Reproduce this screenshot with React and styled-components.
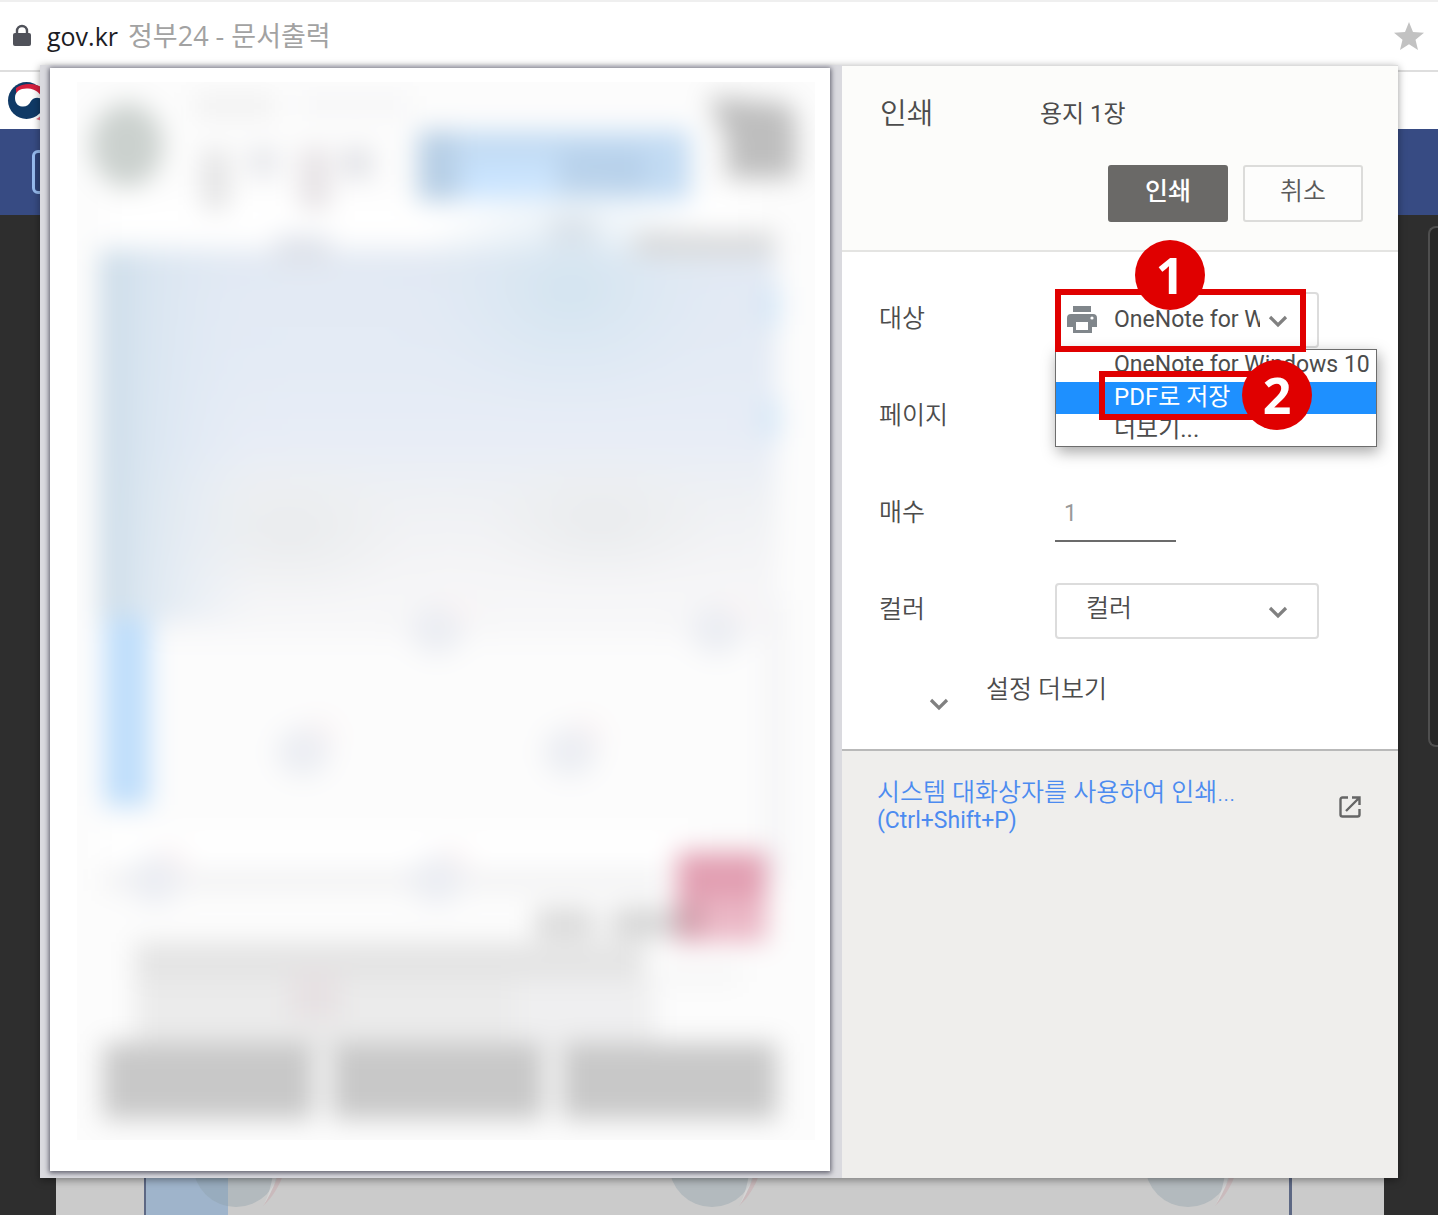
import React, { useState } from "react";
import styled, { createGlobalStyle } from "styled-components";

const GlobalStyle = createGlobalStyle`
  *, *::before, *::after { box-sizing: border-box; }
  body {
    margin: 0;
    color: #4c4c4c;
    font-family: Roboto, "Noto Sans CJK KR", sans-serif;
    font-size: 25px;
    line-height: 28px;
  }
  button, input, select { font: inherit; color: inherit; margin: 0; }
`;

const Screen = styled.div`
  display: grid;
  grid-template-columns: minmax(0, 1fr);
  min-height: 100vh;
  > * { grid-area: 1 / 1; }
`;

/* ---------- window behind the dialog ---------- */

const Backdrop = styled.div`
  display: flex;
  flex-direction: column;
  background: #2e2e2e;
`;

const AddressBar = styled.header`
  display: flex;
  align-items: center;
  height: 72px;
  padding: 0 14px 0 13px;
  background: #fff;
  border-top: 2px solid #efefef;
  border-bottom: 2px solid #dedede;
`;

const Address = styled.div`
  flex: 1;
  margin-left: 16px;
  color: #a2a2a2;
  font-family: "Open Sans", "Noto Sans CJK KR", sans-serif;
  font-size: 27px;
  font-weight: 400;
`;

const Host = styled.span`
  margin-right: 10px;
  color: #1c1c24;
  font-size: 25px;
`;

const StarButton = styled.button`
  display: flex;
  padding: 0;
  border: 0;
  background: none;
`;

const SiteHeader = styled.div`
  display: flex;
  height: 57px;
  padding: 9px 0 0 7px;
  background: #fff;
`;

const SiteNav = styled.div`
  display: flex;
  align-items: center;
  height: 86px;
  padding-left: 32px;
  background: #374b83;
`;

const NavBox = styled.div`
  width: 90px;
  height: 44px;
  background: #2e4278;
  border: 3px solid #97bcf0;
  border-radius: 6px;
`;

const Viewer = styled.div`
  display: flex;
  flex: 1;
  padding-left: 56px;
`;

const Sheet = styled.div`
  display: flex;
  flex: 1;
  justify-content: center;
  padding: 0 92px 0 88px;
  background: #cbcbcb;
`;

const SheetBody = styled.div`
  display: flex;
  flex: 1;
  align-items: flex-end;
  justify-content: space-between;
  padding: 0 44px 0 47px;
  border: solid #5d6884;
  border-width: 0 3px 0 2px;
  background: linear-gradient(90deg, #9fb4cb 82px, transparent 82px);
`;

const ScrollRail = styled.div`
  display: flex;
  justify-content: flex-end;
  width: 54px;
  padding-top: 11px;
`;

const ScrollThumb = styled.div`
  width: 10px;
  height: 521px;
  background: #272727;
  border: 2px solid #4f4f4f;
  border-right: 0;
  border-radius: 8px 0 0 8px;
`;

/* ---------- print dialog ---------- */

const Dialog = styled.section`
  display: grid;
  grid-template-columns: minmax(0, 1fr) 556px;
  align-self: start;
  margin: 65px 40px 37px;
  background: #efeeec;
  box-shadow: 0 2px 8px rgba(0, 0, 0, 0.4);
`;

const PreviewPane = styled.div`
  padding: 3px 12px 7px 10px;
  background: #dadadf;
`;

const Paper = styled.div`
  padding: 14px 15px 31px 27px;
  background: #fff;
  box-shadow: 0 1px 5px 1px rgba(50, 50, 65, 0.75);
  svg { display: block; width: 100%; height: auto; }
`;

const Settings = styled.form`
  display: flex;
  flex-direction: column;
`;

const Heading = styled.div`
  display: flex;
  flex-direction: column;
  gap: 37px;
  padding: 34px 35px 28px 38px;
  background: #fcfcfa;
  border-top: 1px solid #dcdcdc;
  border-bottom: 2px solid #e4e4e2;
`;

const TitleRow = styled.div`
  display: flex;
  align-items: center;
`;

const Title = styled.h1`
  width: 160px;
  margin: 0;
  font-size: 29px;
  font-weight: 350;
  line-height: 28px;
`;

const Summary = styled.span`
  font-size: 24px;
`;

const Actions = styled.div`
  display: flex;
  justify-content: flex-end;
  gap: 15px;
`;

const ActionButton = styled.button`
  width: 120px;
  height: 57px;
  padding: 0 0 4px;
  border: 2px solid ${(p) => (p.$primary ? "#6a6967" : "#dcdcda")};
  border-radius: 3px;
  background: ${(p) => (p.$primary ? "#6a6967" : "#fdfdfc")};
  color: ${(p) => (p.$primary ? "#fff" : "#5a5a5a")};
  font-weight: ${(p) => (p.$primary ? 500 : 350)};
`;

const Fields = styled.div`
  display: flex;
  flex-direction: column;
  gap: 1px;
  padding: 20px 22px 0 37px;
  background: #fff;
`;

const Field = styled.div`
  display: flex;
  align-items: center;
  height: 96px;
`;

const FieldLabel = styled.label`
  width: 176px;
  padding-bottom: 2px;
  font-weight: 350;
`;

const SelectBox = styled.div`
  position: relative;
  width: 264px;
`;

const Select = styled.select`
  display: block;
  width: 100%;
  height: 56px;
  padding: 0 57px ${(p) => (p.$wide ? 0 : 4)}px ${(p) => (p.$wide ? 57 : 29)}px;
  appearance: none;
  background: #fff;
  border: 2px solid #dcdcdc;
  border-radius: 4px;
  font-size: ${(p) => (p.$wide ? 23 : 25)}px;
  font-weight: ${(p) => (p.$wide ? 400 : 350)};
`;

const SelectArrow = styled.span`
  position: absolute;
  top: 23px;
  right: 31px;
  display: flex;
  pointer-events: none;
`;

const SelectIcon = styled.span`
  position: absolute;
  top: 14px;
  left: 11px;
  display: flex;
  pointer-events: none;
`;

const Options = styled.div`
  position: absolute;
  z-index: 1;
  top: 57px;
  left: 0;
  width: 322px;
  background: #fff;
  border: 1px solid #6d6d6d;
  box-shadow: 2px 5px 14px rgba(0, 0, 0, 0.35);
`;

const Option = styled.button`
  display: block;
  width: 100%;
  height: 32px;
  padding: 0 0 2px 58px;
  border: 0;
  background: ${(p) => (p.$active ? "#1e90ff" : "#fff")};
  color: ${(p) => (p.$active ? "#fff" : "#4c4c4c")};
  font-size: ${(p) => (p.$korean ? 24 : 23)}px;
  line-height: 28px;
  text-align: left;
  white-space: nowrap;
`;

const CountInput = styled.input`
  width: 121px;
  height: 56px;
  padding: 0 9px;
  border: 0;
  border-bottom: 2px solid #6b6b6b;
  background: none;
  color: #999;
  font-size: 23px;
`;

const MoreButton = styled.button`
  display: flex;
  gap: 37px;
  height: 92px;
  padding: 17px 0 0 87px;
  border: 0;
  border-bottom: 2px solid #b9b9b9;
  background: #fff;
  font-weight: 350;
  text-align: left;
  svg { margin-top: 22px; }
`;

const SystemDialog = styled.a`
  display: flex;
  align-items: center;
  justify-content: space-between;
  padding: 28px 36px 16px 35px;
  color: #4c8bf0;
  font-size: 23px;
  text-decoration: none;
`;

const SystemText = styled.span`
  display: flex;
  flex-direction: column;
`;

const KoreanLine = styled.span`
  font-size: 25px;
  font-weight: 350;
`;

/* ---------- tutorial marks ---------- */

const Frame = styled.span`
  position: absolute;
  z-index: 2;
  top: ${(p) => p.$y}px;
  left: ${(p) => p.$x}px;
  width: ${(p) => p.$w}px;
  height: ${(p) => p.$h}px;
  border: 6px solid #e00000;
  pointer-events: none;
`;

const Badge = styled.span`
  position: absolute;
  z-index: 3;
  top: ${(p) => p.$y}px;
  left: ${(p) => p.$x}px;
  width: 70px;
  height: 70px;
  border-radius: 50%;
  background: #e00000;
  color: #fff;
  font-family: "Open Sans", sans-serif;
  font-size: 50px;
  font-weight: 700;
  line-height: 70px;
  text-align: center;
  pointer-events: none;
`;

const Chevron = () => (
  <svg width="20" height="13" viewBox="0 0 20 13" fill="none" stroke="#808080" strokeWidth="3.2">
    <path d="M2 2l8 8 8-8" />
  </svg>
);

const Lock = () => (
  <svg width="18" height="24" viewBox="0 0 18 24">
    <path d="M4 10V7a5 5 0 0 1 10 0v3" fill="none" stroke="#50525a" strokeWidth="2.4" />
    <rect y="9" width="18" height="13" rx="2" fill="#50525a" />
  </svg>
);

const Star = () => (
  <svg width="30" height="30" viewBox="0 0 30 30" fill="#c2c2c2">
    <path d="M15 1l4 10 11 .8-8.500 7L24 29l-9-5.800L6 29l2.500-10.200L0 11.800 11 11z" />
  </svg>
);

const Emblem = () => (
  <svg width="40" height="40" viewBox="0 0 40 40">
    <circle cx="19.500" cy="19.500" r="18.500" fill="#103a66" />
    <path d="M9 7C16 2 28 1 38 8v10C30 10 20 6 9 12z" fill="#d5203e" />
    <path d="M8 17C8 10 14 7 21 7.500 28 8 34 12 36 19c-4-3-9-3-12 1-2 4-5 6-9 5.500C10 25 8 21 8 17z" fill="#fff" />
    <path d="M29 38c2-1 4-2 6-5v7z" fill="#e36a7c" />
  </svg>
);

const Watermark = () => (
  <svg width="100" height="90" viewBox="0 0 100 90">
    <circle cx="43" cy="39" r="43" fill="#8f9fa9" opacity=".4" />
    <path d="M94 20C96 46 83 70 70 81 80 66 89 46 89 20z" fill="#c99aa0" opacity=".35" />
    <path d="M88 20c0 26-8 46-18 61 8-14 12-36 12-61z" fill="#dcdcdc" opacity=".6" />
  </svg>
);

const Printer = () => (
  <svg width="32" height="28" viewBox="0 0 32 28">
    <rect x="7" y="0" width="18" height="6" fill="#80868b" />
    <path d="M5 8h22q4 0 4 4v9h-5v6H7v-6H1v-9q0-4 4-4z" fill="#80868b" />
    <rect x="10" y="16" width="12" height="8" fill="#fff" />
    <circle cx="26" cy="12" r="1.600" fill="#fff" />
  </svg>
);

const OpenExternal = () => (
  <svg width="24" height="24" viewBox="0 0 24 24" fill="none" stroke="#666" strokeWidth="2.400">
    <path d="M10 2.500H4.500q-2 0-2 2v15q0 2 2 2h15q2 0 2-2V14M14 2.500h7.500V10M21 3L8 16" />
  </svg>
);

const blots = [[437, 630], [717, 630], [303, 752], [570, 752], [155, 880], [437, 880]];

const DocumentPreview = () => (
  <svg viewBox="77 82 738 1058" role="img" aria-label="문서">
    <defs>
      <filter id="soft" x="0" y="0" width="100%" height="100%" colorInterpolationFilters="sRGB">
        <feGaussianBlur stdDeviation="13" />
      </filter>
      <linearGradient id="table" x1="0" y1="0" x2="0" y2="1">
        <stop offset="0" stopColor="#e2e9f3" />
        <stop offset=".3" stopColor="#e4ebf5" />
        <stop offset=".5" stopColor="#e8edf6" />
        <stop offset=".64" stopColor="#eff1f4" />
        <stop offset=".8" stopColor="#f4f4f6" />
        <stop offset="1" stopColor="#f8f8f9" />
      </linearGradient>
      <linearGradient id="side" x1="0" y1="0" x2="1" y2="0">
        <stop offset="0" stopColor="#c8d9e6" />
        <stop offset=".25" stopColor="#d5e3ef" stopOpacity=".8" />
        <stop offset="1" stopColor="#e2ebf6" stopOpacity="0" />
      </linearGradient>
      <radialGradient id="tint">
        <stop offset="0" stopColor="#d3e4f0" />
        <stop offset="1" stopColor="#dce9f4" stopOpacity="0" />
      </radialGradient>
      <radialGradient id="gray">
        <stop offset="0" stopColor="#e9ebed" />
        <stop offset="1" stopColor="#eceeef" stopOpacity="0" />
      </radialGradient>
    </defs>
    <rect x="77" y="82" width="738" height="1058" fill="#fbfbfb" />
    <g filter="url(#soft)">
      <rect x="40" y="40" width="820" height="1140" fill="#fcfcfc" />
      <rect x="110" y="198" width="640" height="38" fill="#fff" />
      <ellipse cx="127" cy="145" rx="36" ry="42" fill="#cbd1ce" />
      <rect x="195" y="94" width="80" height="24" fill="#f1f1f1" />
      <rect x="300" y="94" width="110" height="22" fill="#f6f6f7" />
      <rect x="203" y="150" width="25" height="60" fill="#e2e2e3" />
      <rect x="248" y="148" width="30" height="28" fill="#e6e7eb" />
      <rect x="300" y="148" width="30" height="62" fill="#e6e2e5" />
      <rect x="343" y="148" width="28" height="30" fill="#dfe0e5" />
      <rect x="418" y="131" width="272" height="68" fill="#c2dbf3" />
      <rect x="418" y="131" width="38" height="70" fill="#b6cee5" />
      <rect x="465" y="163" width="90" height="36" fill="#c9e4ff" />
      <rect x="560" y="150" width="85" height="44" fill="#b6d0ea" />
      <path d="M708 96L790 104 796 120V178H727V142z" fill="#bebebe" />
      <rect x="550" y="215" width="45" height="34" fill="#dfe0e4" />
      <rect x="100" y="250" width="676" height="390" fill="url(#table)" />
      <ellipse cx="290" cy="530" rx="130" ry="80" fill="url(#gray)" />
      <ellipse cx="600" cy="520" rx="130" ry="70" fill="url(#gray)" />
      <rect x="100" y="250" width="160" height="370" fill="url(#side)" />
      <ellipse cx="570" cy="290" rx="160" ry="130" fill="url(#tint)" />
      <rect x="275" y="235" width="55" height="30" fill="#dfe3eb" />
      <rect x="635" y="232" width="140" height="24" fill="#d8d9da" />
      <rect x="762" y="287" width="18" height="38" fill="#d3e6f7" />
      <rect x="762" y="400" width="18" height="38" fill="#d3e6f7" />
      <rect x="100" y="830" width="600" height="36" fill="#fff" />
      <rect x="104" y="618" width="46" height="188" fill="#bfdefb" />
      <rect x="768" y="600" width="14" height="280" fill="#f1f1f4" />
      <rect x="103" y="868" width="560" height="24" fill="#f3f3f4" />
      {blots.map(([x, y]) => (
        <g key={`${x}-${y}`}>
          <ellipse cx={x + 16} cy={y - 16} rx="18" ry="19" fill="#fbf4f5" />
          <ellipse cx={x} cy={y} rx="27" ry="25" fill="#eceef3" />
        </g>
      ))}
      <rect x="135" y="942" width="510" height="42" fill="#e4e4e4" />
      <rect x="135" y="980" width="380" height="70" fill="#ebebeb" />
      <rect x="515" y="980" width="140" height="70" fill="#efeff0" />
      <rect x="290" y="970" width="50" height="50" fill="#e7e1e3" />
      <rect x="535" y="908" width="60" height="30" fill="#dadada" />
      <rect x="612" y="908" width="90" height="30" fill="#d5d5d5" />
      <rect x="677" y="852" width="90" height="90" fill="#e29fb2" />
      <rect x="695" y="900" width="72" height="42" fill="#ebb8c6" />
      <rect x="677" y="905" width="25" height="30" fill="#cf9ca9" />
      <rect x="660" y="965" width="80" height="20" fill="#f6f6f6" />
      <rect x="103" y="1043" width="211" height="76" fill="#c8c8c8" />
      <rect x="332" y="1043" width="212" height="76" fill="#c8c8c8" />
      <rect x="562" y="1043" width="215" height="76" fill="#c8c8c8" />
    </g>
  </svg>
);

export default function App() {
  const [copies, setCopies] = useState("1");
  return (
    <Screen>
      <GlobalStyle />
      <Backdrop>
        <AddressBar>
          <Lock />
          <Address>
            <Host>gov.kr</Host>정부24 - 문서출력
          </Address>
          <StarButton type="button" aria-label="즐겨찾기"><Star /></StarButton>
        </AddressBar>
        <SiteHeader><Emblem /></SiteHeader>
        <SiteNav><NavBox /></SiteNav>
        <Viewer>
          <Sheet>
            <SheetBody>
              <Watermark />
              <Watermark />
              <Watermark />
            </SheetBody>
          </Sheet>
          <ScrollRail><ScrollThumb /></ScrollRail>
        </Viewer>
      </Backdrop>

      <Dialog role="dialog" aria-label="인쇄">
        <PreviewPane>
          <Paper><DocumentPreview /></Paper>
        </PreviewPane>
        <Settings onSubmit={(e) => e.preventDefault()}>
          <Heading>
            <TitleRow>
              <Title>인쇄</Title>
              <Summary>용지 1장</Summary>
            </TitleRow>
            <Actions>
              <ActionButton type="submit" $primary>인쇄</ActionButton>
              <ActionButton type="button">취소</ActionButton>
            </Actions>
          </Heading>
          <Fields>
            <Field>
              <FieldLabel htmlFor="target">대상</FieldLabel>
              <SelectBox>
                <Select id="target" $wide defaultValue="onenote">
                  <option value="onenote">OneNote for Windows 10</option>
                  <option value="pdf">PDF로 저장</option>
                  <option value="more">더보기...</option>
                </Select>
                <SelectIcon><Printer /></SelectIcon>
                <SelectArrow><Chevron /></SelectArrow>
                <Options role="listbox" aria-label="대상">
                  <Option type="button" role="option">OneNote for Windows 10</Option>
                  <Option type="button" role="option" aria-selected $active $korean>PDF로 저장</Option>
                  <Option type="button" role="option" $korean>더보기...</Option>
                </Options>
                <Frame $x={0} $y={-3} $w={251} $h={63} />
                <Frame $x={44} $y={79} $w={156} $h={49} />
                <Badge $x={80} $y={-52}>1</Badge>
                <Badge $x={187} $y={68}>2</Badge>
              </SelectBox>
            </Field>
            <Field>
              <FieldLabel as="span">페이지</FieldLabel>
            </Field>
            <Field>
              <FieldLabel htmlFor="copies">매수</FieldLabel>
              <CountInput id="copies" value={copies} onChange={(e) => setCopies(e.target.value)} />
            </Field>
            <Field>
              <FieldLabel htmlFor="color">컬러</FieldLabel>
              <SelectBox>
                <Select id="color"><option>컬러</option></Select>
                <SelectArrow><Chevron /></SelectArrow>
              </SelectBox>
            </Field>
          </Fields>
          <MoreButton type="button">
            <Chevron />
            설정 더보기
          </MoreButton>
          <SystemDialog href="#system">
            <SystemText>
              <KoreanLine>시스템 대화상자를 사용하여 인쇄...</KoreanLine>
              <span>(Ctrl+Shift+P)</span>
            </SystemText>
            <OpenExternal />
          </SystemDialog>
        </Settings>
      </Dialog>
    </Screen>
  );
}
